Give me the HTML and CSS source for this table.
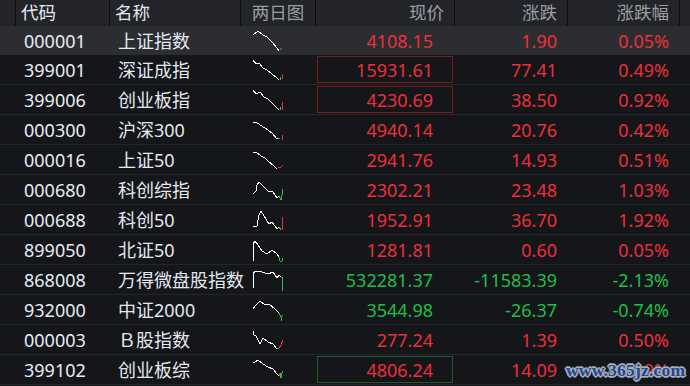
FILE: index.html
```html
<!DOCTYPE html>
<html lang="zh">
<head>
<meta charset="utf-8">
<link rel="stylesheet" href="styles.css">
</head>
<body>
<div class="quote">
  <div class="row head">
    <div class="c idx"></div>
    <div class="c code">代码</div>
    <div class="c name">名称</div>
    <div class="c chart">两日图</div>
    <div class="c price">现价</div>
    <div class="c chg">涨跌</div>
    <div class="c pct">涨跌幅</div>
    <div class="c tail"></div>
  </div>

  <div class="row sel">
    <div class="c idx"></div><div class="c code">000001</div><div class="c name">上证指数</div>
    <div class="c chart"><svg viewBox="0 0 36 26"><polyline class="w" points="1,7 6,3 11,7 15,9 20,14 25,20 27,23"/><polyline class="g" points="28,22 30,20"/></svg></div>
    <div class="c price up">4108.15</div><div class="c chg up">1.90</div><div class="c pct up">0.05%</div><div class="c tail"></div>
  </div>

  <div class="row">
    <div class="c idx"></div><div class="c code">399001</div><div class="c name">深证成指</div>
    <div class="c chart"><svg viewBox="0 0 36 26"><polyline class="w" points="1,3 4,7 7,6 11,11 15,13 20,17 25,21 27,23"/><polyline class="g" points="28,23 29,20"/><polyline class="r" points="30.5,17 30.5,22"/></svg></div>
    <div class="c price up"><span class="box red">15931.61</span></div><div class="c chg up">77.41</div><div class="c pct up">0.49%</div><div class="c tail"></div>
  </div>

  <div class="row">
    <div class="c idx"></div><div class="c code">399006</div><div class="c name">创业板指</div>
    <div class="c chart"><svg viewBox="0 0 36 26"><polyline class="w" points="1,3 4,7 8,5 12,10 16,12 21,17 25,21 27,23"/><polyline class="g" points="28,23 29,20"/><polyline class="r" points="30.5,15 30.5,23"/></svg></div>
    <div class="c price up"><span class="box red">4230.69</span></div><div class="c chg up">38.50</div><div class="c pct up">0.92%</div><div class="c tail"></div>
  </div>

  <div class="row">
    <div class="c idx"></div><div class="c code">000300</div><div class="c name">沪深300</div>
    <div class="c chart"><svg viewBox="0 0 36 26"><polyline class="w" points="1,6 4,5 8,8 13,11 20,16 25,22 27,21"/><polyline class="g" points="26,21 28,21"/><polyline class="r" points="30.5,18 30.5,23"/></svg></div>
    <div class="c price up">4940.14</div><div class="c chg up">20.76</div><div class="c pct up">0.42%</div><div class="c tail"></div>
  </div>

  <div class="row">
    <div class="c idx"></div><div class="c code">000016</div><div class="c name">上证50</div>
    <div class="c chart"><svg viewBox="0 0 36 26"><polyline class="w" points="1,6 4,5 9,9 13,11 17,15 21,18 25,22"/><polyline class="r" points="26,21 29,20 31,18"/></svg></div>
    <div class="c price up">2941.76</div><div class="c chg up">14.93</div><div class="c pct up">0.51%</div><div class="c tail"></div>
  </div>

  <div class="row">
    <div class="c idx"></div><div class="c code">000680</div><div class="c name">科创综指</div>
    <div class="c chart"><svg viewBox="0 0 36 26"><polyline class="w" points="1,17 4,14 5,8 7,5 11,9 16,14 21,15 25,21 27,19"/><polyline class="g" points="27,19 29,23 30,18 31,12"/></svg></div>
    <div class="c price up">2302.21</div><div class="c chg up">23.48</div><div class="c pct up">1.03%</div><div class="c tail"></div>
  </div>

  <div class="row">
    <div class="c idx"></div><div class="c code">000688</div><div class="c name">科创50</div>
    <div class="c chart"><svg viewBox="0 0 36 26"><polyline class="w" points="1,19 5,19 7,8 9,4 12,9 17,17 20,15 25,22 27,20"/><polyline class="g" points="27,20 29,23"/><polyline class="r" points="30.5,10 30.5,23"/></svg></div>
    <div class="c price up">1952.91</div><div class="c chg up">36.70</div><div class="c pct up">1.92%</div><div class="c tail"></div>
  </div>

  <div class="row">
    <div class="c idx"></div><div class="c code">899050</div><div class="c name">北证50</div>
    <div class="c chart"><svg viewBox="0 0 36 26"><polyline class="w" points="1,24 1,7 3,4 6,8 10,14 15,17 20,13 25,17 27,20"/><polyline class="g" points="27,20 28,24 30,24 31,21"/></svg></div>
    <div class="c price up">1281.81</div><div class="c chg up">0.60</div><div class="c pct up">0.05%</div><div class="c tail"></div>
  </div>

  <div class="row">
    <div class="c idx"></div><div class="c code">868008</div><div class="c name">万得微盘股指数</div>
    <div class="c chart"><svg viewBox="0 0 36 26"><polyline class="w" points="1,21 1,6 4,4 10,5 16,7 21,5 25,11 27,8 29,10"/><polyline class="r" points="29,10 30,10"/><polyline class="g" points="30.5,10 30.5,24"/></svg></div>
    <div class="c price dn">532281.37</div><div class="c chg dn">-11583.39</div><div class="c pct dn">-2.13%</div><div class="c tail"></div>
  </div>

  <div class="row">
    <div class="c idx"></div><div class="c code">932000</div><div class="c name">中证2000</div>
    <div class="c chart"><svg viewBox="0 0 36 26"><polyline class="w" points="1,12 4,8 8,4 12,7 18,8 22,11 25,14 27,16"/><polyline class="g" points="27,16 29,20 29.5,24 30,19 31,18"/></svg></div>
    <div class="c price dn">3544.98</div><div class="c chg dn">-26.37</div><div class="c pct dn">-0.74%</div><div class="c tail"></div>
  </div>

  <div class="row">
    <div class="c idx"></div><div class="c code">000003</div><div class="c name">Ｂ股指数</div>
    <div class="c chart"><svg viewBox="0 0 36 26"><polyline class="w" points="1,4 2,8 4,9 8,17 11,11 16,15 21,17 25,22"/><polyline class="g" points="25,22 27,21"/><polyline class="r" points="27,21 29,18 31,13"/></svg></div>
    <div class="c price up">277.24</div><div class="c chg up">1.39</div><div class="c pct up">0.50%</div><div class="c tail"></div>
  </div>

  <div class="row">
    <div class="c idx"></div><div class="c code">399102</div><div class="c name">创业板综</div>
    <div class="c chart"><svg viewBox="0 0 36 26"><polyline class="w" points="1,6 3,5 6,3 11,7 16,10 21,12 25,17 27,19"/><polyline class="r" points="27,19 28,16"/><polyline class="g" points="28,16 29,21 30,16 30.5,14"/></svg></div>
    <div class="c price up"><span class="box green">4806.24</span></div><div class="c chg up">14.09</div><div class="c pct up">0.29%</div><div class="c tail"></div>
  </div>

  <div class="watermark">www.365jz.com</div>
</div>
</body>
</html>
```

FILE: styles.css
```css
html, body {
  margin: 0;
  padding: 0;
  background: #14161a;
}

.quote {
  position: relative;
  width: 690px;
  height: 386px;
  overflow: hidden;
  background: #14161a;
  font-family: "Noto Sans", "Noto Sans CJK SC", sans-serif;
  font-size: 18px;
}

.row {
  display: grid;
  grid-template-columns: 16px 94px 131px 75px 139px 113px 112px 10px;
  height: 30px;
  box-sizing: border-box;
  border-bottom: 1px solid #23262b;
  align-items: center;
  line-height: 1;
}

.row.head {
  height: 26px;
  background: #222429;
  border-bottom: none;
  color: #9b9ea3;
  font-size: 17.5px;
  align-items: stretch;
}

.row.head .c {
  border-right: 1px solid #0c0d0f;
  display: flex;
  align-items: center;
}

.row.head .code { padding-left: 5px; }
.row.head .name { padding-left: 5px; }
.row.head .chart { justify-content: center; padding: 0; }
.row.head .price,
.row.head .chg,
.row.head .pct { justify-content: flex-end; padding-right: 10px; }
.row.head .tail { border-right: none; }

.row.sel {
  background: #2c2d31;
  height: 29px;
  border-bottom: none;
}

.c {
  white-space: nowrap;
  box-sizing: border-box;
  height: 100%;
  display: flex;
  align-items: center;
}

.code {
  padding-left: 8px;
  color: #e6ecf3;
}

.name {
  padding-left: 8px;
  color: #e3e8ee;
  overflow: visible;
}

.chart {
  padding-left: 11px;
}

.chart svg {
  width: 36px;
  height: 26px;
  display: block;
  overflow: visible;
}

.chart polyline {
  fill: none;
  stroke-width: 1;
  shape-rendering: crispEdges;
}

.chart .w { stroke: #ffffff; }
.chart .r { stroke: #e8323c; }
.chart .g { stroke: #22c24c; }

.price {
  justify-content: flex-end;
  padding-right: 22px;
}

.chg,
.pct {
  justify-content: flex-end;
  padding-right: 11px;
}

.up { color: #ec2f3b; }
.dn { color: #20bd4a; }

.price .box {
  display: flex;
  align-items: center;
  justify-content: flex-end;
  box-sizing: border-box;
  width: 136px;
  height: 27px;
  margin-right: -20px;
  padding-right: 19px;
  border: 1px solid;
}

.box.red { border-color: #7c1a1f; }
.box.green { border-color: #1c5a2b; }

.watermark {
  position: absolute;
  left: 566px;
  top: 360px;
  font-family: "Liberation Serif", serif;
  font-weight: bold;
  font-size: 17.5px;
  color: #23478a;
  text-shadow:
    1px 1px 0 #a9b1bd, -1px -1px 0 #a9b1bd, 1px -1px 0 #a9b1bd, -1px 1px 0 #a9b1bd,
    2px 0 0 #8b94a3, -2px 0 0 #8b94a3, 0 2px 0 #8b94a3, 0 -2px 0 #8b94a3;
  letter-spacing: 0.2px;
}
```
